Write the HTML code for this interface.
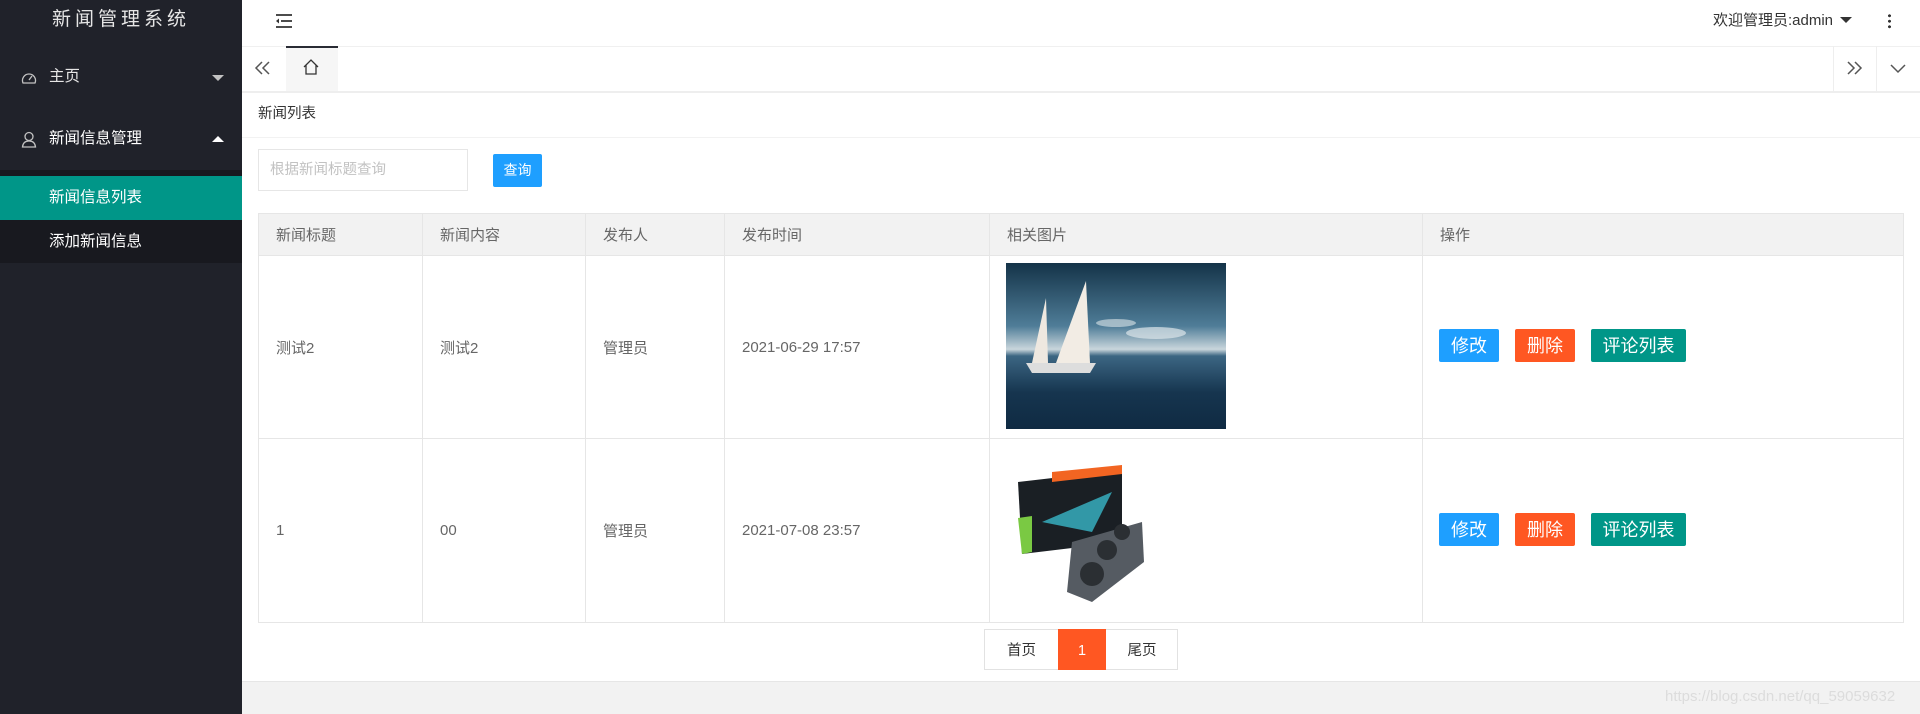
<!DOCTYPE html>
<html><head><meta charset="utf-8"><style>
*{margin:0;padding:0;box-sizing:border-box}
body{width:1920px;height:714px;overflow:hidden;font-family:"Liberation Sans","Noto Sans CJK SC",sans-serif;background:#fff;position:relative;color:#666}
.abs{position:absolute}
#side{left:0;top:0;width:242px;height:714px;background:#20222a}
.logo{left:0;top:0;width:242px;height:46px;line-height:40px;text-align:center;color:#e6e6e6;font-size:19px;letter-spacing:4px}
.mi{left:0;width:242px;color:#fff;font-size:15.5px}
.tri{width:0;height:0;border-left:6px solid transparent;border-right:6px solid transparent}
td,th{border:1px solid #e6e6e6;font-weight:normal;text-align:left;padding-left:17px;font-size:15px;color:#666}
.btn{position:absolute;height:33px;line-height:35px;color:#fff;font-size:18px;text-align:center;border-radius:2px}
</style></head><body>
<div id="side" class="abs">
 <div class="logo abs">新闻管理系统</div>
 <div class="mi abs" style="top:60px;height:34px;line-height:34px">
  <svg class="abs" style="left:21px;top:10px" width="16" height="16" viewBox="0 0 16 16"><path d="M2 13A6.5 6.5 0 1 1 14 13Z" fill="none" stroke="#c2c2c2" stroke-width="1.3"/><path d="M8 10L11 6" stroke="#c2c2c2" stroke-width="1.3"/></svg>
  <span class="abs" style="left:49px;color:#e6e6e6">主页</span>
  <div class="tri abs" style="left:212px;top:15px;border-top:6px solid #c2c2c2"></div>
 </div>
 <div class="mi abs" style="top:122px;height:34px;line-height:34px">
  <svg class="abs" style="left:21px;top:9px" width="16" height="17" viewBox="0 0 16 17"><circle cx="8" cy="5.5" r="4" fill="none" stroke="#c2c2c2" stroke-width="1.3"/><path d="M1.5 16C2 11 5 10 8 10S14 11 14.5 16Z" fill="none" stroke="#c2c2c2" stroke-width="1.3"/></svg>
  <span class="abs" style="left:49px">新闻信息管理</span>
  <div class="tri abs" style="left:212px;top:14px;border-bottom:6px solid #fff"></div>
 </div>
 <div class="abs" style="left:0;top:170px;width:242px;height:93px;background:#18191f"></div>
 <div class="mi abs" style="top:176px;height:44px;line-height:44px;background:#009688;padding-left:49px">新闻信息列表</div>
 <div class="mi abs" style="top:220px;height:43px;line-height:43px;padding-left:49px">添加新闻信息</div>
</div>
<svg class="abs" style="left:275px;top:13px" width="18" height="16" viewBox="0 0 18 16"><path d="M1 2H17M6 8H17M1 14H17" stroke="#333" stroke-width="1.8"/><path d="M1 8L4 5.5V10.5Z" fill="#333"/></svg>
<div class="abs" style="left:1713px;top:1px;height:40px;line-height:40px;font-size:15px;color:#333">欢迎管理员:admin</div>
<div class="tri abs" style="left:1840px;top:17px;border-top:6px solid #333"></div>
<div class="abs" style="left:1888px;top:13px;width:3px;height:16px;background:radial-gradient(circle,#333 1.4px,transparent 1.6px) 0 0/3px 5.5px"></div>
<div class="abs" style="left:242px;top:46px;width:1678px;height:1px;background:#f0f0f0"></div>
<div class="abs" style="left:242px;top:91px;width:1678px;height:2px;background:#eee"></div>
<svg class="abs" style="left:254px;top:60px" width="18" height="16" viewBox="0 0 18 16"><path d="M8 2L2 8L8 14M15 2L9 8L15 14" fill="none" stroke="#555" stroke-width="1.5"/></svg>
<div class="abs" style="left:286px;top:46px;width:52px;height:45px;background:#f6f6f6;border-top:2px solid #292b34"></div>
<svg class="abs" style="left:302px;top:58px" width="18" height="18" viewBox="0 0 18 18"><path d="M2 9L9 2L16 9M4 7V16H14V7" fill="none" stroke="#333" stroke-width="1.3"/></svg>
<div class="abs" style="left:1833px;top:46px;width:1px;height:45px;background:#eee"></div>
<div class="abs" style="left:1876px;top:46px;width:1px;height:45px;background:#eee"></div>
<svg class="abs" style="left:1845px;top:60px" width="18" height="16" viewBox="0 0 18 16"><path d="M3 2L9 8L3 14M10 2L16 8L10 14" fill="none" stroke="#555" stroke-width="1.5"/></svg>
<svg class="abs" style="left:1889px;top:62px" width="18" height="12" viewBox="0 0 18 12"><path d="M2 3L9 10L16 3" fill="none" stroke="#555" stroke-width="1.5"/></svg>
<div class="abs" style="left:258px;top:92px;height:45px;line-height:45px;font-size:14.5px;color:#333">新闻列表</div>
<div class="abs" style="left:242px;top:137px;width:1678px;height:1px;background:#f2f2f2"></div>
<div class="abs" style="left:258px;top:149px;width:210px;height:42px;border:1px solid #e6e6e6;line-height:40px;padding-left:11px;font-size:14.5px;color:#c2c2c2">根据新闻标题查询</div>
<div class="abs" style="left:493px;top:154px;width:49px;height:33px;background:#1e9fff;color:#fff;line-height:33px;text-align:center;font-size:14px;border-radius:2px">查询</div>
<table class="abs" style="left:258px;top:213px;width:1646px;border-collapse:collapse">
<tr style="height:42px;background:#f2f2f2"><th style="width:164px">新闻标题</th><th style="width:163px">新闻内容</th><th style="width:139px">发布人</th><th style="width:265px">发布时间</th><th style="width:433px">相关图片</th><th>操作</th></tr>
<tr style="height:183px"><td>测试2</td><td>测试2</td><td>管理员</td><td>2021-06-29 17:57</td><td></td><td></td></tr>
<tr style="height:184px"><td>1</td><td>00</td><td>管理员</td><td>2021-07-08 23:57</td><td></td><td></td></tr>
</table>
<div class="abs" style="left:1006px;top:263px;width:220px;height:166px;background:linear-gradient(180deg,#143348 0%,#4f7d98 38%,#c9d6dc 52%,#3c6683 56%,#16354f 78%,#0f2a42 100%)"></div>
<svg class="abs" style="left:1006px;top:263px" width="220" height="166" viewBox="0 0 220 166"><path d="M26 100L40 35L42 100Z" fill="#eee8e0"/><path d="M50 100L80 18L84 100Z" fill="#f2ece4"/><path d="M20 100H90L84 110H26Z" fill="#ddd"/><ellipse cx="150" cy="70" rx="30" ry="6" fill="#dde6ea" opacity=".7"/><ellipse cx="110" cy="60" rx="20" ry="4" fill="#dde6ea" opacity=".6"/></svg>
<svg class="abs" style="left:1012px;top:462px" width="160" height="140" viewBox="0 0 160 140"><path d="M6 20L110 8V80L10 92Z" fill="#1a1f24"/><path d="M40 10L110 3V12L40 20Z" fill="#f26522"/><path d="M6 56L20 54V90L10 92Z" fill="#7ac943"/><path d="M30 60L100 30L80 70Z" fill="#38b6c8" opacity=".8"/><path d="M60 80L130 60L132 100L80 140L55 130Z" fill="#555b62"/><circle cx="95" cy="88" r="10" fill="#2b2f33"/><circle cx="80" cy="112" r="12" fill="#2b2f33"/><circle cx="110" cy="70" r="8" fill="#2b2f33"/></svg>
<div class="btn" style="left:1439px;top:329px;width:60px;background:#1e9fff">修改</div>
<div class="btn" style="left:1515px;top:329px;width:60px;background:#ff5722">删除</div>
<div class="btn" style="left:1591px;top:329px;width:95px;background:#009688">评论列表</div>
<div class="btn" style="left:1439px;top:513px;width:60px;background:#1e9fff">修改</div>
<div class="btn" style="left:1515px;top:513px;width:60px;background:#ff5722">删除</div>
<div class="btn" style="left:1591px;top:513px;width:95px;background:#009688">评论列表</div>
<div class="abs" style="left:984px;top:629px;width:194px;height:41px;border:1px solid #e2e2e2"></div>
<div class="abs" style="left:985px;top:630px;width:73px;height:39px;line-height:43px;text-align:center;font-size:14.5px;color:#333">首页</div>
<div class="abs" style="left:1058px;top:629px;width:48px;height:41px;line-height:44px;text-align:center;font-size:14.5px;color:#fff;background:#ff5722">1</div>
<div class="abs" style="left:1106px;top:630px;width:72px;height:39px;line-height:43px;text-align:center;font-size:14.5px;color:#333">尾页</div>
<div class="abs" style="left:242px;top:681px;width:1678px;height:33px;background:#f2f2f2;border-top:1px solid #e6e6e6"></div>
<div class="abs" style="left:1665px;top:688px;font-size:15px;color:#dcdcdc">https://blog.csdn.net/qq_59059632</div>
</body></html>
